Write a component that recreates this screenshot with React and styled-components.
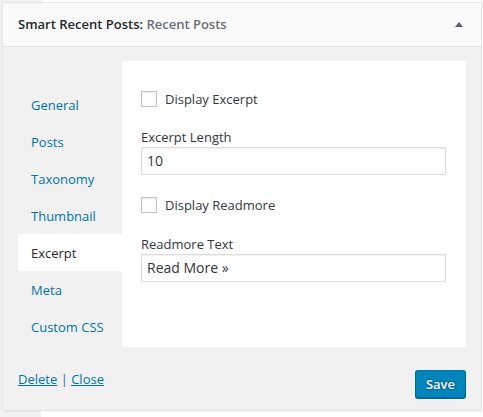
import React from "react";
import styled, { createGlobalStyle } from "styled-components";

const Global = createGlobalStyle`
  html, body { margin: 0; padding: 0; }
  body {
    background: linear-gradient(to right, #f1f1f1 41px, #ffffff 41px);
    font-family: "Open Sans", "Noto Sans", sans-serif;
    font-size: 13px;
    color: #444;
    min-height: 417px;
  }
  * { box-sizing: border-box; }
`;

const Widget = styled.div`
  margin: 2px 0 0 2px;
  width: 480px;
  border: 1px solid #e5e5e5;
  background: #f1f1f1;
  box-shadow: 0 1px 1px rgba(0, 0, 0, 0.04);
`;

const Header = styled.div`
  height: 44px;
  display: flex;
  align-items: center;
  justify-content: space-between;
  padding: 0 18px 0 15px;
  background: #fafafa;
  border-bottom: 1px solid #e5e5e5;
`;

const Title = styled.h3`
  margin: 0;
  font-size: 13px;
  font-weight: 600;
  line-height: 1;
  color: #23282d;
`;

const TitleSub = styled.span`
  color: #686f76;
`;

const Inside = styled.div`
  padding: 14px 15px 12px;
`;

const Columns = styled.div`
  display: flex;
  height: 286px;
`;

const Nav = styled.ul`
  list-style: none;
  margin: 0;
  padding: 25px 0 0;
  width: 104px;
  flex: none;
`;

const Tab = styled.li`
  height: 37px;
  line-height: 38px;
  padding-left: 13px;
  font-size: 13px;
  color: ${(p) => (p.$active ? "#23282d" : "#0073aa")};
  background: ${(p) => (p.$active ? "#ffffff" : "transparent")};
`;

const Panel = styled.div`
  flex: 1;
  background: #fff;
  padding: 28px 20px 0 19px;
  display: flex;
  flex-direction: column;
`;

const CheckRow = styled.label`
  display: flex;
  align-items: center;
  height: 20px;
  gap: 8px;
  color: #32373c;
  font-size: 13px;
  line-height: 18px;
  margin-top: ${(p) => p.$mt || 0}px;
`;

const Box = styled.span`
  width: 16px;
  height: 16px;
  border: 1px solid #bfc3c7;
  background: #fff;
  box-shadow: inset 0 1px 2px rgba(0, 0, 0, 0.08);
  flex: none;
`;

const Field = styled.div`
  margin-top: ${(p) => p.$mt || 0}px;
  display: flex;
  flex-direction: column;
`;

const Label = styled.div`
  height: 20px;
  line-height: 20px;
  font-size: 13px;
  color: #32373c;
`;

const Input = styled.div`
  height: 28px;
  width: 305px;
  border: 1px solid #ddd;
  box-shadow: inset 0 1px 2px rgba(0, 0, 0, 0.07);
  padding: 0 5px;
  font-size: 14px;
  line-height: 26px;
  color: #32373c;
  background: #fff;
`;

const Footer = styled.div`
  display: flex;
  justify-content: space-between;
  align-items: flex-start;
  margin-top: 23px;
`;

const Links = styled.div`
  line-height: 18px;
  font-size: 13px;
  color: #2c6d97;
`;

const Link = styled.a`
  color: #0073aa;
  text-decoration: underline;
`;

const Button = styled.button`
  height: 28px;
  padding: 0 10px 1px;
  font-family: inherit;
  font-size: 13px;
  font-weight: 600;
  line-height: 26px;
  color: #fff;
  background: #0085ba;
  border: 1px solid;
  border-color: #0073aa #006799 #006799;
  border-radius: 3px;
  box-shadow: 0 1px 0 #006799;
  text-shadow: 0 -1px 1px #006799, 1px 0 1px #006799, 0 1px 1px #006799, -1px 0 1px #006799;
`;

const tabs = ["General", "Posts", "Taxonomy", "Thumbnail", "Excerpt", "Meta", "Custom CSS"];

export default function App() {
  return (
    <>
      <Global />
      <Widget>
        <Header>
          <Title>
            Smart Recent Posts: <TitleSub>Recent Posts</TitleSub>
          </Title>
          <svg width="8" height="5" viewBox="0 0 8 5">
            <polygon points="4,0 8,5 0,5" fill="#555d66" />
          </svg>
        </Header>
        <Inside>
          <Columns>
            <Nav>
              {tabs.map((t) => (
                <Tab key={t} $active={t === "Excerpt"}>
                  {t}
                </Tab>
              ))}
            </Nav>
            <Panel>
              <CheckRow>
                <Box />
                Display Excerpt
              </CheckRow>
              <Field $mt={18}>
                <Label>Excerpt Length</Label>
                <Input>10</Input>
              </Field>
              <CheckRow $mt={20}>
                <Box />
                Display Readmore
              </CheckRow>
              <Field $mt={19}>
                <Label>Readmore Text</Label>
                <Input>Read More »</Input>
              </Field>
            </Panel>
          </Columns>
          <Footer>
            <Links>
              <Link>Delete</Link> | <Link>Close</Link>
            </Links>
            <Button>Save</Button>
          </Footer>
        </Inside>
      </Widget>
    </>
  );
}
